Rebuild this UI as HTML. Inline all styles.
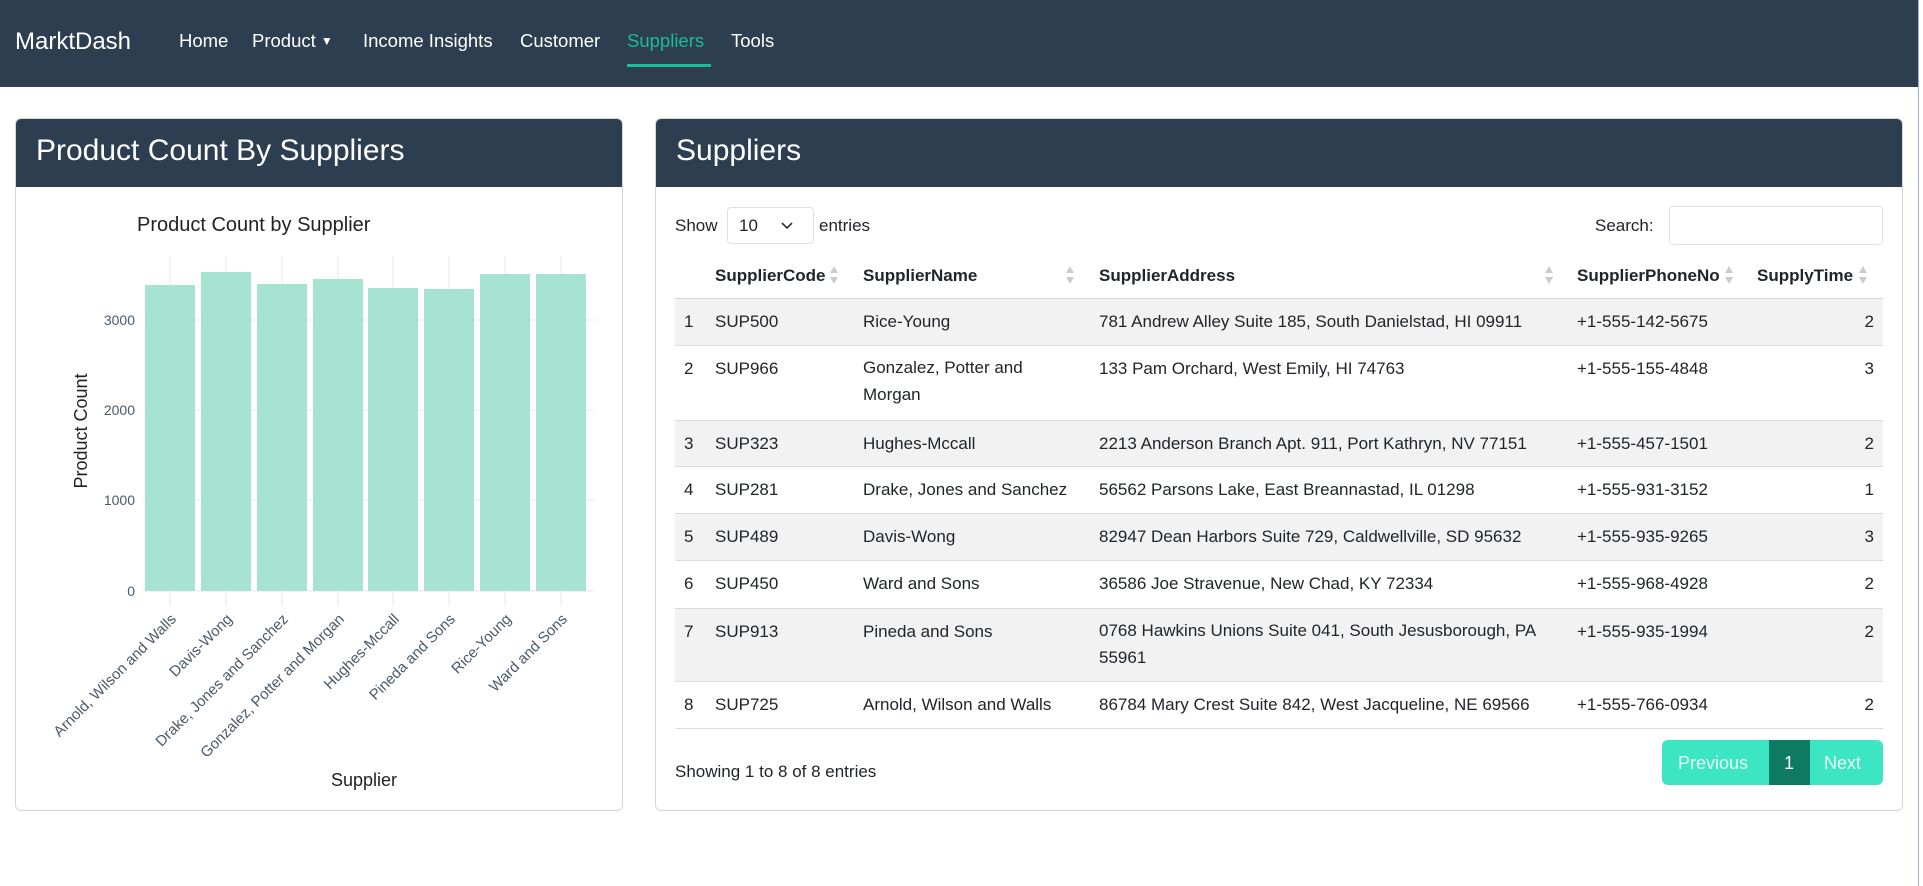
<!DOCTYPE html>
<html><head><meta charset="utf-8"><style>
*{margin:0;padding:0;box-sizing:border-box}
body{width:1923px;height:886px;background:#fff;font-family:"Liberation Sans",sans-serif;color:#212529;position:relative;overflow:hidden}
.a{position:absolute;white-space:nowrap}
.nav{position:absolute;left:0;top:0;width:1918px;height:87px;background:#2c3e50}
.nav .a{color:#fff;font-size:18.5px;top:30px}
.card{position:absolute;top:118px;height:693px;border:1px solid #d6d6d6;border-radius:6px;overflow:hidden;background:#fff}
.ch{position:absolute;left:0;top:0;right:0;height:68px;background:#2c3e50;color:#fff;font-size:30px;padding:15px 0 0 20px}
.t{font-size:17px;color:#212529}
.row{position:absolute;left:675px;width:1208px;border-bottom:1px solid #dcdcdc}
.row .a{top:13px}
.s{background:#f2f2f2}
.th{font-weight:bold;font-size:17px;top:266px}
.sort{position:absolute;top:265px;width:10px;height:20px}
</style></head><body>
<div class="nav">
<div class="a" style="left:15px;top:28px;font-size:24px">MarktDash</div>
<div class="a" style="left:179px">Home</div>
<div class="a" style="left:252px">Product <span style="font-size:12px;position:relative;top:-2px">▼</span></div>
<div class="a" style="left:363px">Income Insights</div>
<div class="a" style="left:520px">Customer</div>
<div class="a" style="left:627px;color:#1abc9c">Suppliers</div>
<div class="a" style="left:731px">Tools</div>
<div style="position:absolute;left:627px;top:64px;width:84px;height:3px;background:#1abc9c"></div>
</div>
<div style="position:absolute;left:1918px;top:0;width:1px;height:886px;background:#9fb3e0"></div>

<div class="card" style="left:15px;width:608px"><div class="ch">Product Count By Suppliers</div></div>
<div class="card" style="left:655px;width:1248px"><div class="ch">Suppliers</div></div>

<svg class="a" style="left:0;top:0" width="640" height="820" font-family="Liberation Sans, sans-serif">
<text x="137" y="231" font-size="20" fill="#222">Product Count by Supplier</text>
<g stroke="#e8e8e8" stroke-width="1">
<line x1="143" y1="320" x2="594" y2="320"/><line x1="143" y1="410" x2="594" y2="410"/><line x1="143" y1="500" x2="594" y2="500"/>
<line x1="170" y1="256" x2="170" y2="590"/><line x1="226" y1="256" x2="226" y2="590"/><line x1="282" y1="256" x2="282" y2="590"/><line x1="338" y1="256" x2="338" y2="590"/><line x1="393" y1="256" x2="393" y2="590"/><line x1="449" y1="256" x2="449" y2="590"/><line x1="505" y1="256" x2="505" y2="590"/><line x1="561" y1="256" x2="561" y2="590"/>
<line x1="143" y1="591" x2="594" y2="591"/>
<line x1="170" y1="591" x2="170" y2="606"/><line x1="226" y1="591" x2="226" y2="606"/><line x1="282" y1="591" x2="282" y2="606"/><line x1="338" y1="591" x2="338" y2="606"/><line x1="393" y1="591" x2="393" y2="606"/><line x1="449" y1="591" x2="449" y2="606"/><line x1="505" y1="591" x2="505" y2="606"/><line x1="561" y1="591" x2="561" y2="606"/>
</g>
<g fill="#a6e3d0">
<rect x="145" y="285" width="50" height="306"/><rect x="201" y="272" width="50" height="319"/><rect x="257" y="284" width="50" height="307"/><rect x="313" y="279" width="50" height="312"/><rect x="368" y="288" width="50" height="303"/><rect x="424" y="289" width="50" height="302"/><rect x="480" y="274" width="50" height="317"/><rect x="536" y="274" width="50" height="317"/>
</g>
<g font-size="14" fill="#4a5a6a" text-anchor="end">
<text x="135" y="325">3000</text><text x="135" y="415">2000</text><text x="135" y="505">1000</text><text x="135" y="596">0</text>
</g>
<text transform="translate(87,431) rotate(-90)" font-size="18" fill="#222" text-anchor="middle">Product Count</text>
<g font-size="15" fill="#4a5a6a" text-anchor="end">
<text transform="translate(177,620) rotate(-45)">Arnold, Wilson and Walls</text>
<text transform="translate(233,620) rotate(-45)">Davis-Wong</text>
<text transform="translate(289,620) rotate(-45)">Drake, Jones and Sanchez</text>
<text transform="translate(345,620) rotate(-45)">Gonzalez, Potter and Morgan</text>
<text transform="translate(400,620) rotate(-45)">Hughes-Mccall</text>
<text transform="translate(456,620) rotate(-45)">Pineda and Sons</text>
<text transform="translate(512,620) rotate(-45)">Rice-Young</text>
<text transform="translate(568,620) rotate(-45)">Ward and Sons</text>
</g>
<text x="364" y="786" font-size="18" fill="#222" text-anchor="middle">Supplier</text>
</svg>

<div class="a t" style="left:675px;top:216px">Show</div>
<div style="position:absolute;left:727px;top:207px;width:87px;height:37px;border:1px solid #dee2e6;border-radius:4px"></div>
<div class="a t" style="left:739px;top:216px">10</div>
<svg class="a" style="left:780px;top:221px" width="14" height="10"><path d="M2 2 L7 7 L12 2" fill="none" stroke="#333" stroke-width="1.6"/></svg>
<div class="a t" style="left:819px;top:216px">entries</div>
<div class="a t" style="left:1595px;top:216px">Search:</div>
<div style="position:absolute;left:1669px;top:206px;width:214px;height:39px;border:1px solid #dee2e6;border-radius:4px"></div>

<div class="a th" style="left:715px">SupplierCode</div>
<div class="a th" style="left:863px">SupplierName</div>
<div class="a th" style="left:1099px">SupplierAddress</div>
<div class="a th" style="left:1577px">SupplierPhoneNo</div>
<div class="a th" style="left:1757px">SupplyTime</div>
<svg class="sort" style="left:829px" viewBox="0 0 10 20"><path d="M1 8 L5 1 L9 8Z M1 12 L5 19 L9 12Z" fill="#ccc"/></svg>
<svg class="sort" style="left:1065px" viewBox="0 0 10 20"><path d="M1 8 L5 1 L9 8Z M1 12 L5 19 L9 12Z" fill="#ccc"/></svg>
<svg class="sort" style="left:1544px" viewBox="0 0 10 20"><path d="M1 8 L5 1 L9 8Z M1 12 L5 19 L9 12Z" fill="#ccc"/></svg>
<svg class="sort" style="left:1724px" viewBox="0 0 10 20"><path d="M1 8 L5 1 L9 8Z M1 12 L5 19 L9 12Z" fill="#ccc"/></svg>
<svg class="sort" style="left:1858px" viewBox="0 0 10 20"><path d="M1 8 L5 1 L9 8Z M1 12 L5 19 L9 12Z" fill="#ccc"/></svg>
<div style="position:absolute;left:675px;top:298px;width:1208px;height:1px;background:#d4d4d4"></div>

<div class="row s t" style="top:299px;height:47px"><div class="a" style="left:9px">1</div><div class="a" style="left:40px">SUP500</div><div class="a" style="left:188px">Rice-Young</div><div class="a" style="left:424px">781 Andrew Alley Suite 185, South Danielstad, HI 09911</div><div class="a" style="left:902px">+1-555-142-5675</div><div class="a" style="right:9px">2</div></div>
<div class="row t" style="top:346px;height:75px"><div class="a" style="left:9px">2</div><div class="a" style="left:40px">SUP966</div><div class="a" style="left:188px;line-height:27px;top:8px">Gonzalez, Potter and<br>Morgan</div><div class="a" style="left:424px">133 Pam Orchard, West Emily, HI 74763</div><div class="a" style="left:902px">+1-555-155-4848</div><div class="a" style="right:9px">3</div></div>
<div class="row s t" style="top:421px;height:46px"><div class="a" style="left:9px">3</div><div class="a" style="left:40px">SUP323</div><div class="a" style="left:188px">Hughes-Mccall</div><div class="a" style="left:424px">2213 Anderson Branch Apt. 911, Port Kathryn, NV 77151</div><div class="a" style="left:902px">+1-555-457-1501</div><div class="a" style="right:9px">2</div></div>
<div class="row t" style="top:467px;height:47px"><div class="a" style="left:9px">4</div><div class="a" style="left:40px">SUP281</div><div class="a" style="left:188px">Drake, Jones and Sanchez</div><div class="a" style="left:424px">56562 Parsons Lake, East Breannastad, IL 01298</div><div class="a" style="left:902px">+1-555-931-3152</div><div class="a" style="right:9px">1</div></div>
<div class="row s t" style="top:514px;height:47px"><div class="a" style="left:9px">5</div><div class="a" style="left:40px">SUP489</div><div class="a" style="left:188px">Davis-Wong</div><div class="a" style="left:424px">82947 Dean Harbors Suite 729, Caldwellville, SD 95632</div><div class="a" style="left:902px">+1-555-935-9265</div><div class="a" style="right:9px">3</div></div>
<div class="row t" style="top:561px;height:48px"><div class="a" style="left:9px">6</div><div class="a" style="left:40px">SUP450</div><div class="a" style="left:188px">Ward and Sons</div><div class="a" style="left:424px">36586 Joe Stravenue, New Chad, KY 72334</div><div class="a" style="left:902px">+1-555-968-4928</div><div class="a" style="right:9px">2</div></div>
<div class="row s t" style="top:609px;height:73px"><div class="a" style="left:9px">7</div><div class="a" style="left:40px">SUP913</div><div class="a" style="left:188px">Pineda and Sons</div><div class="a" style="left:424px;line-height:27px;top:8px">0768 Hawkins Unions Suite 041, South Jesusborough, PA<br>55961</div><div class="a" style="left:902px">+1-555-935-1994</div><div class="a" style="right:9px">2</div></div>
<div class="row t" style="top:682px;height:47px"><div class="a" style="left:9px">8</div><div class="a" style="left:40px">SUP725</div><div class="a" style="left:188px">Arnold, Wilson and Walls</div><div class="a" style="left:424px">86784 Mary Crest Suite 842, West Jacqueline, NE 69566</div><div class="a" style="left:902px">+1-555-766-0934</div><div class="a" style="right:9px">2</div></div>

<div class="a t" style="left:675px;top:762px">Showing 1 to 8 of 8 entries</div>
<div style="position:absolute;left:1662px;top:740px;width:221px;height:45px;background:#3de6c3;border-radius:6px;overflow:hidden;color:#e8fbf5;font-size:18px">
<div class="a" style="left:16px;top:13px">Previous</div>
<div style="position:absolute;left:107px;top:0;width:41px;height:45px;background:#0e7a62"></div>
<div class="a" style="left:122px;top:13px;color:#fff">1</div>
<div class="a" style="left:162px;top:13px">Next</div>
</div>
</body></html>
